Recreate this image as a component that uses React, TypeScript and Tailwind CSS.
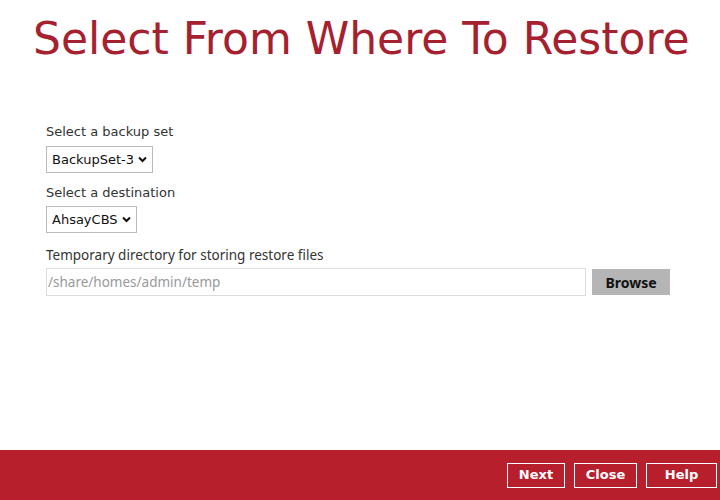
export default function App() {
  return (
    <div className="w-[720px] h-[500px] flex flex-col bg-white font-['DejaVu_Sans',sans-serif]">
      <div className="flex-1">
        <h1 className="pt-[12px] pl-[33px] text-[44px] leading-[54px] text-[#a6212f] whitespace-nowrap">
          Select From Where To Restore
        </h1>
        <div className="pl-[46px] pt-[57px] text-[13px] text-[#333]">
          <p className="leading-[18px]">Select a backup set</p>
          <div className="mt-[5px] inline-flex items-center h-[27px] px-[5px] border border-[#bbb] gap-[4px] text-[#111]">
            <span>BackupSet-3</span>
            <Chevron />
          </div>
          <p className="mt-[11px] leading-[18px]">Select a destination</p>
          <div className="mt-[4px] inline-flex items-center h-[27px] px-[5px] border border-[#bbb] gap-[4px] text-[#111]">
            <span>AhsayCBS</span>
            <Chevron />
          </div>
          <p className="mt-[13px] leading-[18px] font-['Noto_Sans',sans-serif] text-[13.5px]">
            Temporary directory for storing restore files
          </p>
          <div className="mt-[4px] flex items-center gap-[6px]">
            <div className="w-[540px] h-[28px] border border-[#ddd] flex items-center pl-[1px] text-[#999] font-['Noto_Sans',sans-serif] text-[13.5px]">
              /share/homes/admin/temp
            </div>
            <button className="w-[78px] h-[26px] bg-[#b5b5b5] text-[#111] font-bold text-[14px] font-['Noto_Sans',sans-serif]">
              Browse
            </button>
          </div>
        </div>
      </div>
      <div className="h-[50px] bg-[#b81f2d] flex items-center justify-end pr-[3px] gap-[9px]">
        <FooterButton label="Next" w="w-[58px]" />
        <FooterButton label="Close" w="w-[63px]" />
        <FooterButton label="Help" w="w-[71px]" />
      </div>
    </div>
  );
}

function Chevron() {
  return (
    <svg width="9" height="7" viewBox="0 0 9 7">
      <path d="M1 1.5 L4.5 5 L8 1.5" stroke="#111" strokeWidth="2" fill="none" />
    </svg>
  );
}

function FooterButton({ label, w }: { label: string; w: string }) {
  return (
    <button className={`${w} h-[25px] border border-white text-white font-bold text-[13px]`}>
      {label}
    </button>
  );
}
